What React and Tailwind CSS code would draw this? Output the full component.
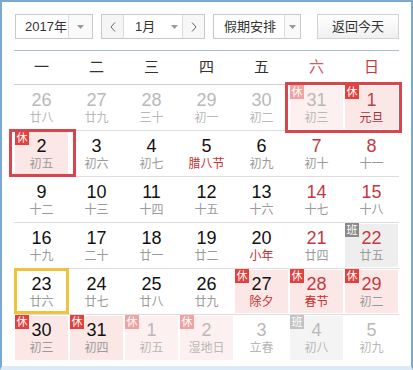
import React from "react";

const weekdays = ["一", "二", "三", "四", "五", "六", "日"];

// d: day, l: lunar text, o: other month, w: weekend, h: rest/work, f: festival, t: today
const days = [
  [
    { d: 26, l: "廿八", o: 1 },
    { d: 27, l: "廿九", o: 1 },
    { d: 28, l: "三十", o: 1 },
    { d: 29, l: "初一", o: 1 },
    { d: 30, l: "初二", o: 1 },
    { d: 31, l: "初三", o: 1, h: "rest" },
    { d: 1, l: "元旦", w: 1, h: "rest", f: 1, ny: 1 },
  ],
  [
    { d: 2, l: "初五", h: "rest" },
    { d: 3, l: "初六" },
    { d: 4, l: "初七" },
    { d: 5, l: "腊八节", f: 1 },
    { d: 6, l: "初九" },
    { d: 7, l: "初十", w: 1 },
    { d: 8, l: "十一", w: 1 },
  ],
  [
    { d: 9, l: "十二" },
    { d: 10, l: "十三" },
    { d: 11, l: "十四" },
    { d: 12, l: "十五" },
    { d: 13, l: "十六" },
    { d: 14, l: "十七", w: 1 },
    { d: 15, l: "十八", w: 1 },
  ],
  [
    { d: 16, l: "十九" },
    { d: 17, l: "二十" },
    { d: 18, l: "廿一" },
    { d: 19, l: "廿二" },
    { d: 20, l: "小年", f: 1 },
    { d: 21, l: "廿四", w: 1 },
    { d: 22, l: "廿五", w: 1, h: "work" },
  ],
  [
    { d: 23, l: "廿六", t: 1 },
    { d: 24, l: "廿七" },
    { d: 25, l: "廿八" },
    { d: 26, l: "廿九" },
    { d: 27, l: "除夕", h: "rest", f: 1 },
    { d: 28, l: "春节", w: 1, h: "rest", f: 1 },
    { d: 29, l: "初二", w: 1, h: "rest" },
  ],
  [
    { d: 30, l: "初三", h: "rest" },
    { d: 31, l: "初四", h: "rest" },
    { d: 1, l: "初五", o: 1, h: "rest" },
    { d: 2, l: "湿地日", o: 1, h: "rest" },
    { d: 3, l: "立春", o: 1 },
    { d: 4, l: "初八", o: 1, w: 1, h: "work" },
    { d: 5, l: "初九", o: 1, w: 1 },
  ],
];

const Caret = () => (
  <svg width="7" height="4" viewBox="0 0 7 4">
    <path d="M0 0h7L3.5 4z" fill="#9a9a9a" />
  </svg>
);

const Chevron = ({ dir }) => (
  <svg width="6" height="10" viewBox="0 0 6 10">
    <polyline
      points={dir === "left" ? "5,0.5 1,5 5,9.5" : "1,0.5 5,5 1,9.5"}
      fill="none"
      stroke="#666"
      strokeWidth="1"
    />
  </svg>
);

function Day({ c }) {
  const rest = c.h === "rest";
  const work = c.h === "work";
  let bg = "";
  if (rest) bg = c.o ? "bg-[#fdf0f0]" : "bg-[#fce7e7]";
  if (work) bg = c.o ? "bg-[#f4f4f4]" : "bg-[#eeeeee]";
  let num = "text-[#111]";
  if (c.w) num = "text-[#c4393f]";
  if (c.ny) num = "text-[#b5474c]";
  if (c.o) num = "text-[#b9b9b9]";
  let lunar = "text-[#9a9a9a]";
  if (c.o) lunar = "text-[#b8b8b8]";
  if (c.f) lunar = "text-[#cc2b2b]";
  if (c.ny) lunar = "text-[#a8323a]";
  let badge = "";
  if (rest) badge = c.o ? "bg-[#eea3a3]" : "bg-[#e2413e]";
  if (work) badge = c.o ? "bg-[#c3c3c3]" : "bg-[#8a8a8a]";

  return (
    <div className="relative p-px">
      <div className={`h-full flex flex-col items-center pt-[4px] ${bg}`}>
        <span className={`text-[18px] leading-[20px] ${num}`}>{c.d}</span>
        <span className={`text-[12px] leading-[16px] ${lunar}`}>{c.l}</span>
      </div>
      {badge && (
        <span className={`absolute left-px top-0 w-[14px] h-[14px] flex items-center justify-center text-[11px] leading-none text-white ${badge}`}>
          {rest ? "休" : "班"}
        </span>
      )}
      {c.t ? <div className="absolute inset-x-0 -top-px bottom-0 border-[3px] border-[#f0c33c]" /> : null}
    </div>
  );
}

export default function App() {
  return (
    <div className="relative w-[413px] h-[370px] bg-white border-x-2 border-t-2 border-b-4 border-[#7ba7d3] border-b-[#dbeaf6] px-[12px] pt-[12px] font-['Liberation_Sans','Noto_Sans_CJK_SC',sans-serif] text-[#333]">
      <div className="flex h-[25px] ml-px text-[13px]">
        <div className="w-[78px] flex border border-[#c9c9c9] bg-white">
          <span className="flex-1 flex items-center pl-[9px]">2017年</span>
          <span className="w-[24px] flex items-center justify-center border-l border-[#dcdcdc] bg-[#fafafa]">
            <Caret />
          </span>
        </div>
        <div className="ml-[8px] w-[104px] flex border border-[#c9c9c9] bg-white">
          <span className="w-[22px] flex items-center justify-center border-r border-[#dcdcdc] bg-[#f5f5f5]">
            <Chevron dir="left" />
          </span>
          <span className="flex-1 flex items-center pl-[11px] gap-[16px]">
            1月
            <Caret />
          </span>
          <span className="w-[22px] flex items-center justify-center border-l border-[#dcdcdc] bg-[#f7f7f7]">
            <Chevron dir="right" />
          </span>
        </div>
        <div className="ml-[8px] w-[88px] flex border border-[#c9c9c9] bg-white">
          <span className="flex-1 flex items-center pl-[10px]">假期安排</span>
          <span className="w-[16px] flex items-center justify-center border-l border-[#dcdcdc] bg-[#fafafa]">
            <Caret />
          </span>
        </div>
        <button className="ml-[16px] w-[82px] flex items-center justify-center border border-[#d2d2d2] bg-gradient-to-b from-white to-[#f0f0f0] text-[#333]">
          返回今天
        </button>
      </div>

      <div className="mt-[11px] grid grid-cols-7 h-[35px] border-t border-b border-t-[#a7bfd8] border-b-[#cfcfcf] text-[15px]">
        {weekdays.map((w, i) => (
          <div
            key={w}
            className={`flex items-center justify-center ${i === 6 ? "text-[#c4393f]" : i === 5 ? "text-[#cf5a5f]" : "text-[#333]"}`}
          >
            {w}
          </div>
        ))}
      </div>

      {days.map((row, r) => (
        <div
          key={r}
          className={`grid grid-cols-7 h-[46px] ${r < days.length - 1 ? "border-b border-[#dedede]" : ""}`}
        >
          {row.map((c, i) => (
            <Day key={i} c={c} />
          ))}
        </div>
      ))}

      {/* hand-drawn highlight boxes */}
      <div className="absolute left-[283px] top-[80px] w-[117px] h-[51px] border-[3px] border-[#d6464c]" />
      <div className="absolute left-[7px] top-[127px] w-[67px] h-[48px] border-[3px] border-[#d6464c]" />
    </div>
  );
}
